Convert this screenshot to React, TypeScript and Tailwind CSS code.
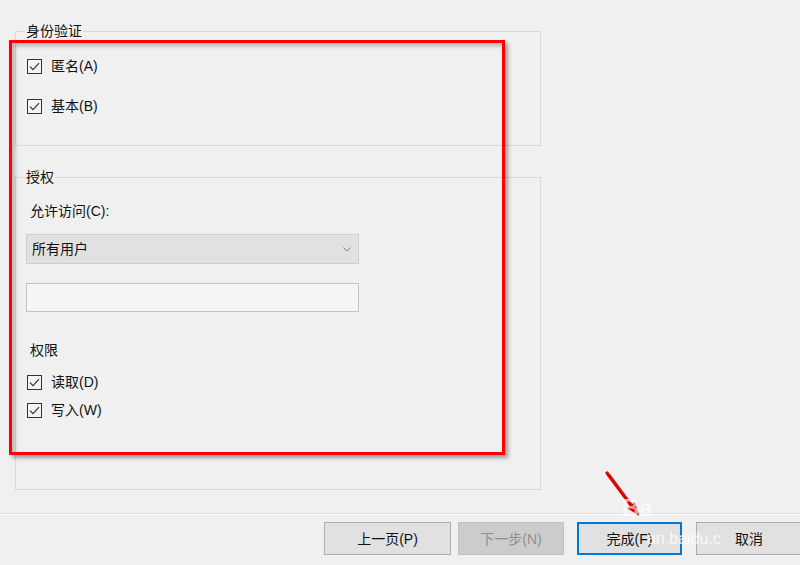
import React from 'react';

const Check: React.FC = () => (
  <svg width="15" height="15" viewBox="0 0 15 15" className="shrink-0">
    <rect x="0.5" y="0.5" width="14" height="14" fill="#f4f4f4" stroke="#333333" />
    <path d="M3 7.6 L6 10.6 L12 4.2" fill="none" stroke="#333333" strokeWidth="1.2" />
  </svg>
);

const CheckRow: React.FC<{ label: string }> = ({ label }) => (
  <div className="flex items-center gap-[9px] h-[20px] pl-[1px]">
    <Check />
    <span>{label}</span>
  </div>
);

type Btn = { label: string; width: string; kind?: 'disabled' | 'default' };

const buttons: Btn[] = [
  { label: '上一页(P)', width: 'w-[127px]' },
  { label: '下一步(N)', width: 'w-[106px]', kind: 'disabled' },
  { label: '完成(F)', width: 'w-[105px]', kind: 'default' },
  { label: '取消', width: 'w-[106px]' },
];

const btnStyle = (b: Btn) => {
  if (b.kind === 'disabled') return 'bg-[#cccccc] border border-[#bfbfbf] text-[#8f8f8f]';
  if (b.kind === 'default') return 'bg-[#e1e1e1] border-2 border-[#0078d7] text-[#111111]';
  return 'bg-[#e1e1e1] border border-[#adadad] text-[#111111]';
};

export default function App() {
  return (
    <div className="relative w-[800px] h-[565px] overflow-hidden bg-[#f0f0f0] text-[14px] leading-[20px] text-[#111111] font-['Liberation_Sans','Noto_Sans_CJK_SC',sans-serif]">
      <div className="pl-[15px] pt-[21px]">
        {/* 身份验证 */}
        <fieldset className="w-[526px] h-[125px] border border-[#d9d9d9] px-[10px]">
          <legend className="px-[1px] -ml-[1px]">身份验证</legend>
          <div className="pt-[15px] flex flex-col gap-[20px]">
            <CheckRow label="匿名(A)" />
            <CheckRow label="基本(B)" />
          </div>
        </fieldset>

        {/* 授权 */}
        <fieldset className="mt-[21px] w-[526px] h-[323px] border border-[#d9d9d9] px-[10px]">
          <legend className="px-[1px] -ml-[1px]">授权</legend>
          <div className="pt-[14px] pl-[4px]">允许访问(C):</div>
          <div className="mt-[13px] w-[333px] h-[30px] bg-[#e1e1e1] border border-[#cfcfcf] flex items-center justify-between pl-[5px] pr-[7px]">
            <span>所有用户</span>
            <svg width="8" height="5" viewBox="0 0 8 5">
              <path d="M0.5 0.5 L4 4 L7.5 0.5" fill="none" stroke="#7a7a7a" strokeWidth="1" />
            </svg>
          </div>
          <div className="mt-[19px] w-[333px] h-[29px] bg-[#f5f5f5] border border-[#c4c4c4]" />
          <div className="mt-[28px] pl-[4px]">权限</div>
          <div className="mt-[12px] flex flex-col gap-[8px]">
            <CheckRow label="读取(D)" />
            <CheckRow label="写入(W)" />
          </div>
        </fieldset>
      </div>

      {/* footer */}
      <div className="mt-[23px] border-t border-[#dadada]">
        <div className="border-t border-white" />
      </div>
      <div className="mt-[7px] pl-[324px] flex">
        {buttons.map((b, i) => (
          <div
            key={b.label}
            className={`${b.width} h-[33px] shrink-0 flex items-center justify-center ${btnStyle(b)} ${
              i === 1 ? 'ml-[7px]' : i === 2 ? 'ml-[13px]' : i === 3 ? 'ml-[14px]' : ''
            }`}
          >
            {b.label}
          </div>
        ))}
      </div>

      {/* annotation box */}
      <div className="absolute left-[9px] top-[40px] w-[496px] h-[415px] border-[3px] border-[#ff0000] shadow-[3px_3px_4px_rgba(0,0,0,0.35),inset_3px_3px_4px_rgba(0,0,0,0.25)]" />

      {/* annotation arrow */}
      <svg className="absolute left-[598px] top-[466px]" width="50" height="56" viewBox="0 0 50 56">
        <g transform="translate(2 2)" opacity="0.3">
          <path d="M9 7 L38 46" stroke="#000" strokeWidth="3.5" fill="none" />
        </g>
        <path d="M9 7 L38 46" stroke="#e30000" strokeWidth="3.2" fill="none" strokeLinecap="round" />
        <path d="M41 50 L29 42 L37 36 Z" fill="#e30000" />
      </svg>

      {/* watermark */}
      <div className="absolute left-[622px] top-[494px] text-[24px] leading-[28px] font-bold text-white opacity-60 font-['Liberation_Sans',sans-serif]">
        Ba
      </div>
      <div className="absolute left-[647px] top-[529px] text-[16px] leading-[20px] text-white opacity-80 font-['Liberation_Sans',sans-serif]">
        an.baidu.c
      </div>
    </div>
  );
}
